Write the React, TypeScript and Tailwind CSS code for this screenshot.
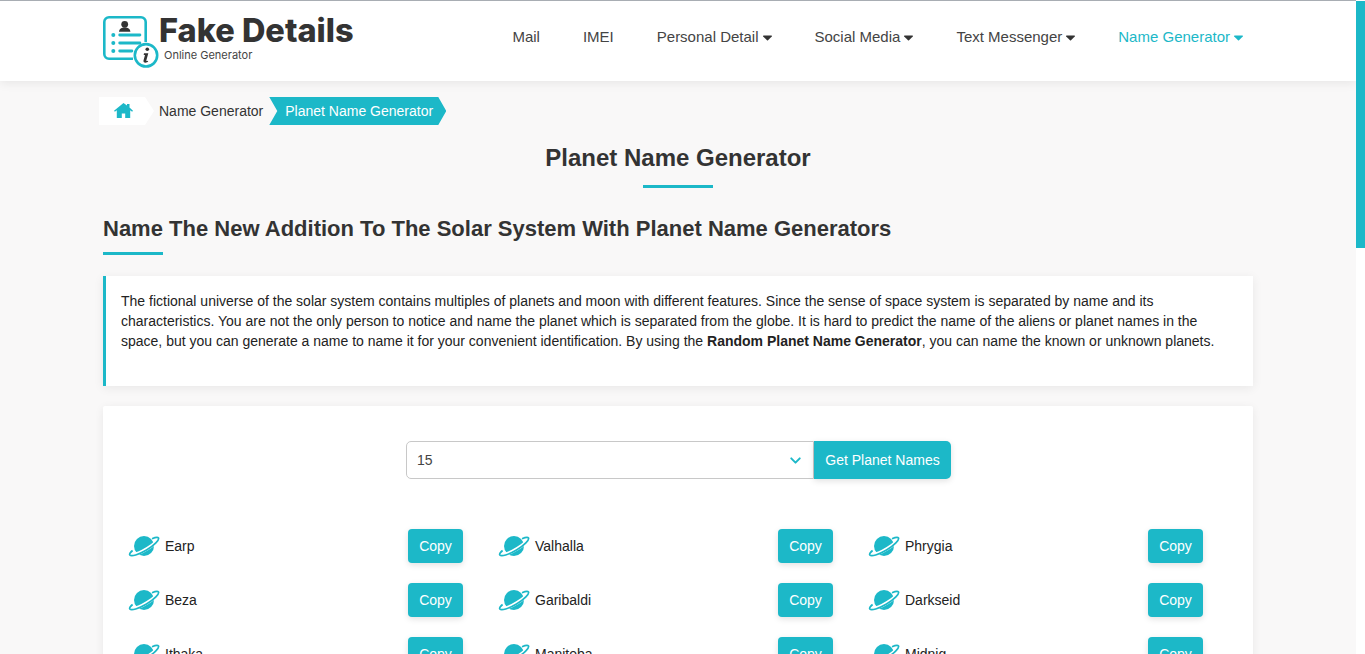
import React from "react";
import { ChevronDown } from "lucide-react";

const Caret = ({ c = "#333" }: { c?: string }) => (
  <svg width="9" height="6" viewBox="0 0 9 6" className="ml-[4px] inline-block">
    <path d="M0.6 0.6h7.8c.5 0 .7.5.4.9L5 5.3c-.3.3-.7.3-1 0L.2 1.5C-.1 1.1.1.6.6.6z" fill={c} />
  </svg>
);

const Logo = () => (
  <svg width="56" height="54" viewBox="0 0 56 54" className="shrink-0">
    <path d="M30 42.700H6a4.700 4.700 0 0 1-4.700-4.700V6A4.700 4.700 0 0 1 6 1.300h32A4.700 4.700 0 0 1 42.700 6v20" fill="none" stroke="#1cb8c8" strokeWidth="2.600" />
    <circle cx="21.700" cy="8.300" r="3.400" fill="#333" />
    <path d="M16 15.800c.3-3.300 2.600-4.300 5.700-4.300s5.400 1 5.700 4.300z" fill="#333" />
    <g fill="#1cb8c8">
      <circle cx="10.300" cy="19" r="2" />
      <circle cx="10.300" cy="27" r="2" />
      <circle cx="10.300" cy="35" r="2" />
      <rect x="15.300" y="17.600" width="23" height="2.800" rx="1.400" />
      <rect x="15.300" y="25.600" width="23" height="2.800" rx="1.400" />
      <rect x="15.300" y="33.600" width="15" height="2.800" rx="1.400" />
    </g>
    <circle cx="43" cy="39.300" r="11.200" fill="#fff" stroke="#1cb8c8" strokeWidth="2.600" />
    <circle cx="44.300" cy="33.300" r="1.800" fill="#333" />
    <path d="M41 37.300h4.300l-2 7.300c-.1.500.5.700 1 .2l1 .8c-1.500 1.500-5.300 1.800-4.800-1l1.500-5.600h-1.300z" fill="#333" />
  </svg>
);

const Planet = () => (
  <svg width="32" height="22" viewBox="0 0 32 22" className="shrink-0">
    <circle cx="16" cy="11" r="10" fill="#1cb8c8" />
    <path d="M2 19.500C6 20.500 13 17.500 19.500 13.500S29.500 5.500 29.500 3.200" fill="none" stroke="#fff" strokeWidth="3.400" />
    <path d="M24 3.800c3-1.300 5.700-1.900 6.500-.8 1 1.700-4 7.200-12 12S3.300 21.800 1.800 20c-.8-1 .5-2.500 2.800-4.500" fill="none" stroke="#1cb8c8" strokeWidth="1.700" />
  </svg>
);

const Row = ({ name }: { name: string }) => (
  <div className="flex h-[34px] items-center justify-between">
    <div className="flex items-center gap-[5px]">
      <Planet />
      <span className="text-[14px] text-[#222]">{name}</span>
    </div>
    <button className="h-[34px] w-[55px] rounded-[4px] bg-[#1cb8c8] text-[14px] text-white shadow-[0_2px_6px_rgba(0,0,0,0.12)]">Copy</button>
  </div>
);

const NavItem = ({ label, caret, active }: { label: string; caret?: boolean; active?: boolean }) => (
  <span className={`flex items-center text-[15px] ${active ? "text-[#1cb8c8]" : "text-[#444]"}`}>
    {label}
    {caret && <Caret c={active ? "#1cb8c8" : "#333"} />}
  </span>
);

const columns = [
  ["Earp", "Beza", "Ithaka"],
  ["Valhalla", "Garibaldi", "Maniteba"],
  ["Phrygia", "Darkseid", "Midnig"],
];

export default function App() {
  return (
    <div className="relative flex h-[654px] overflow-hidden bg-[#f9f8f8] font-['Liberation_Sans',Arial,sans-serif] text-[#333]">
      <div className="flex min-w-0 flex-1 flex-col">
        <header className="h-[81px] shrink-0 border-t border-[#a8adb3] bg-white shadow-[0_2px_10px_rgba(0,0,0,0.08)]">
          <div className="mx-auto flex h-full w-[1150px] items-center justify-between pb-[9px] pr-[10px]">
            <div className="flex items-center pt-[13px]">
              <Logo />
              <div className="-mt-[11px] flex flex-col">
                <span className="font-['Inter',sans-serif] text-[32.500px] font-extrabold leading-[33px] text-[#333]">Fake Details</span>
                <span className="ml-[5px] mt-[2px] font-['Inter',sans-serif] text-[11px] leading-[13px] text-[#444]">Online Generator</span>
              </div>
            </div>
            <nav className="flex items-center gap-[43px] pt-[2px]">
              <NavItem label="Mail" />
              <NavItem label="IMEI" />
              <NavItem label="Personal Detail" caret />
              <NavItem label="Social Media" caret />
              <NavItem label="Text Messenger" caret />
              <NavItem label="Name Generator" caret active />
            </nav>
          </div>
        </header>

        <main className="mx-auto w-[1150px]">
          <div className="-ml-[4px] mt-[16px] flex h-[28px] items-center text-[14px]">
            <div className="flex h-full w-[46px] items-center justify-center bg-white pl-[2px]">
              <svg width="19" height="15" viewBox="0 0 19 15" className="-mt-[1px]">
                <path d="M9.500 0 0 7.800l.9 1L2.800 7.300V15h5v-4.500h3.400V15h5V7.300l1.900 1.500.9-1L15.500 4.500V1h-2.500v1.500z" fill="#1cb8c8" />
              </svg>
            </div>
            <div className="relative flex h-full items-center pl-[14px] pr-[6px] text-[#333]">
              <span className="absolute left-0 top-0 h-0 w-0 border-y-[14px] border-l-[9px] border-y-transparent border-l-white" />
              Name Generator
            </div>
            <div className="relative flex h-full w-[177px] items-center pl-[16px] pr-[3px] text-white [background:#1cb8c8] [clip-path:polygon(0_0,calc(100%-8px)_0,100%_50%,calc(100%-8px)_100%,0_100%,8px_50%)]">
              Planet Name Generator
            </div>
          </div>

          <h1 className="mt-[19px] text-center text-[24px] font-bold leading-[28px] text-[#333]">Planet Name Generator</h1>
          <div className="mx-auto mt-[13px] h-[3px] w-[70px] bg-[#1cb8c8]" />

          <h2 className="mt-[27px] text-[22px] font-bold leading-[27px] text-[#333]">Name The New Addition To The Solar System With Planet Name Generators</h2>
          <div className="mt-[10px] h-[3px] w-[60px] bg-[#1cb8c8]" />

          <section className="mt-[21px] h-[110px] border-l-[3px] border-[#1cb8c8] bg-white pl-[15px] pr-[20px] pt-[15px] shadow-[0_2px_10px_rgba(0,0,0,0.07)]">
            <p className="text-[14px] leading-[20px] text-[#222]">
              The fictional universe of the solar system contains multiples of planets and moon with different features. Since the sense of space system is separated by name and its characteristics. You are not the only person to notice and name the planet which is separated from the globe. It is hard to predict the name of the aliens or planet names in the space, but you can generate a name to name it for your convenient identification. By using the <b>Random Planet Name Generator</b>, you can name the known or unknown planets.
            </p>
          </section>

          <section className="mt-[20px] h-[400px] rounded-[2px] bg-white pt-[35px] shadow-[0_2px_10px_rgba(0,0,0,0.07)]">
            <div className="flex justify-center pl-[1px]">
              <div className="flex h-[38px] w-[408px] items-center justify-between rounded-l-[5px] border border-[#c8c8c8] bg-white pl-[10px] pr-[9px] text-[14px] text-[#444]">
                15
                <ChevronDown size={17} strokeWidth={2.750} color="#1cb8c8" />
              </div>
              <button className="h-[38px] w-[137px] rounded-r-[5px] bg-[#1cb8c8] text-[14px] text-white shadow-[0_2px_6px_rgba(0,0,0,0.12)]">Get Planet Names</button>
            </div>
            <div className="ml-[25px] mt-[50px] grid w-[1075px] grid-cols-3 gap-x-[35px]">
              {columns.map((col) => (
                <div key={col[0]} className="flex flex-col gap-[20px]">
                  {col.map((n) => (
                    <Row key={n} name={n} />
                  ))}
                </div>
              ))}
            </div>
          </section>
        </main>
      </div>
      <div className="relative z-10 w-[9px] shrink-0 bg-white">
        <div className="absolute left-0 top-px h-[247px] w-full bg-[#1cb8c8]" />
      </div>
    </div>
  );
}
